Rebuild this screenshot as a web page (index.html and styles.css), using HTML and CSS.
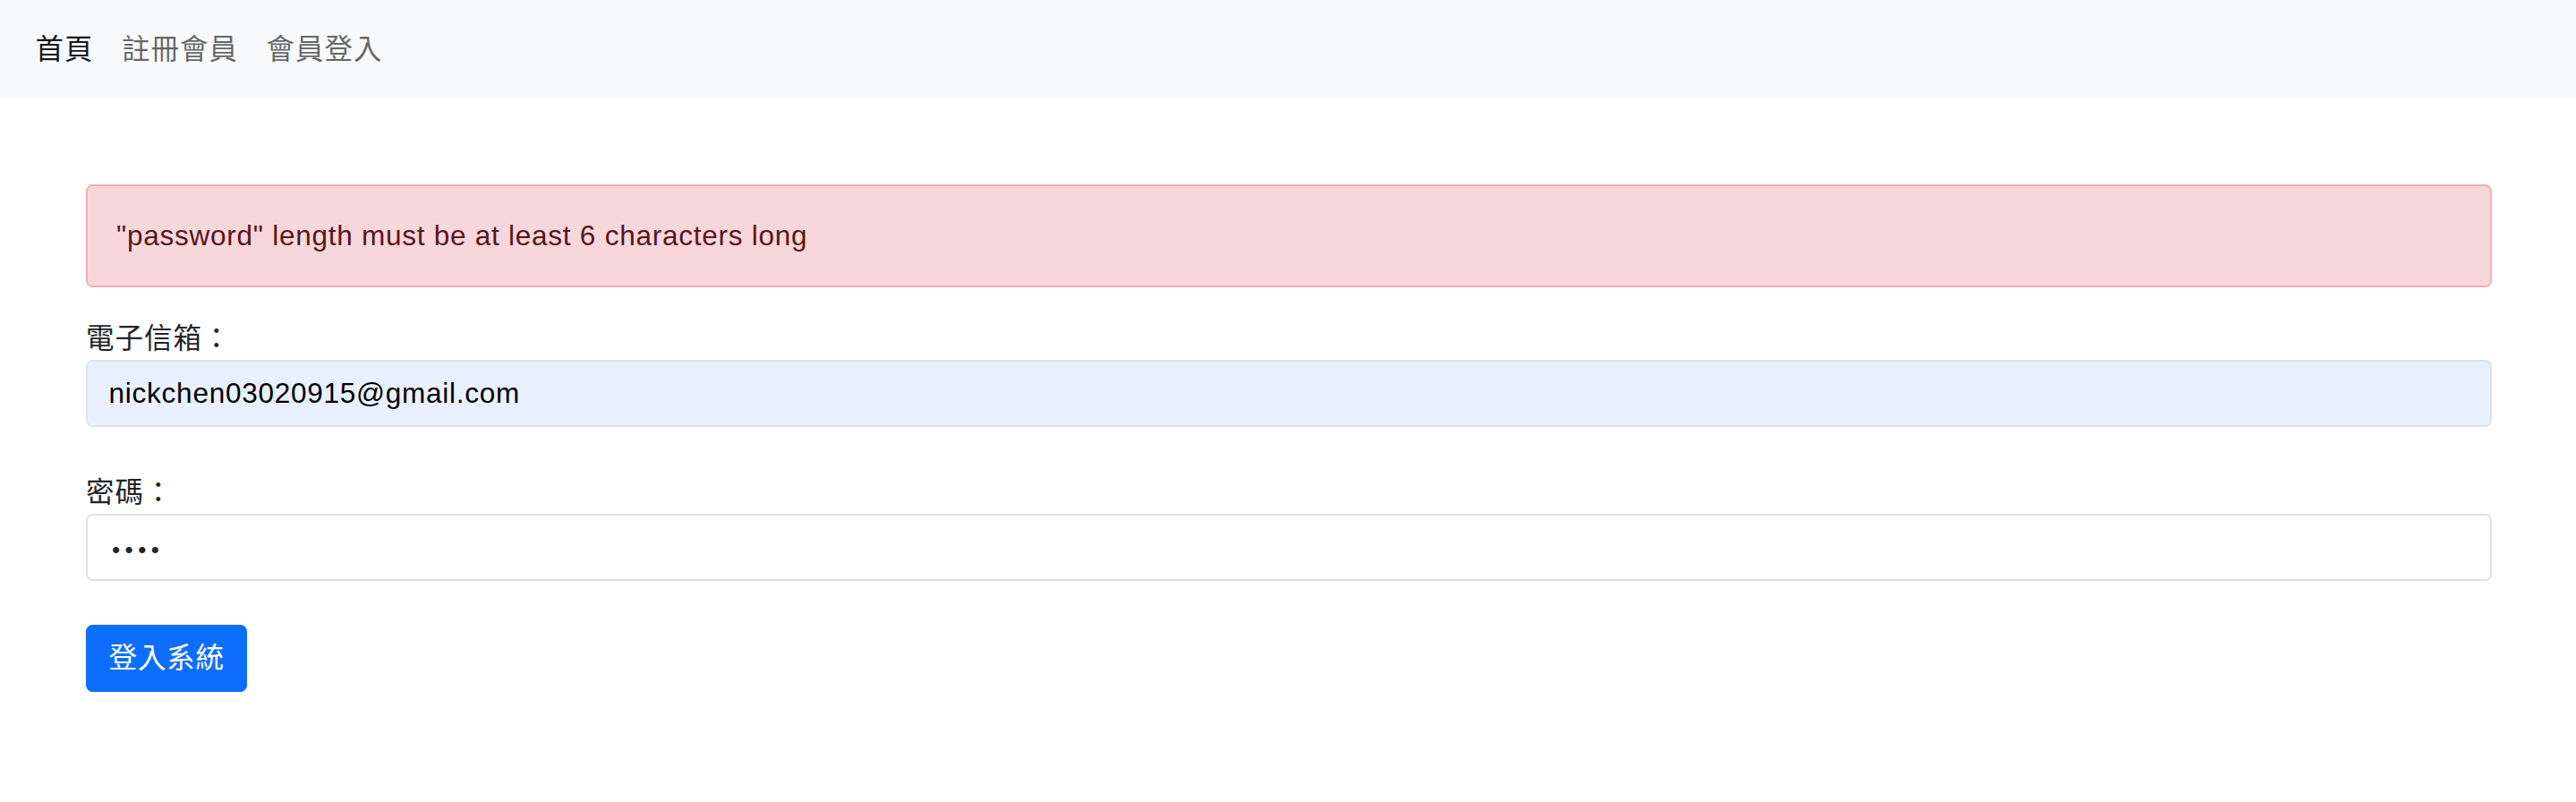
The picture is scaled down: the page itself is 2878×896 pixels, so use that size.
FILE: index.html
```html
<!DOCTYPE html>
<html lang="zh-Hant">
<head>
<meta charset="utf-8">
<title>會員登入</title>
<link rel="stylesheet" href="styles.css">
</head>
<body>
<nav class="navbar">
  <a class="nav-link active" href="#">首頁</a>
  <a class="nav-link" href="#">註冊會員</a>
  <a class="nav-link" href="#">會員登入</a>
</nav>
<main class="container">
  <div class="alert">"password" length must be at least 6 characters long</div>
  <form class="login-form">
    <div class="field">
      <label class="field-label" for="email">電子信箱：</label>
      <input class="field-input autofilled" id="email" type="text" value="nickchen03020915@gmail.com">
    </div>
    <div class="field">
      <label class="field-label" for="password">密碼：</label>
      <input class="field-input password-input" id="password" type="password" value="1234">
    </div>
    <button class="btn-primary" type="button">登入系統</button>
  </form>
</main>
</body>
</html>
```

FILE: styles.css
```css
* { box-sizing: border-box; }

html, body {
  margin: 0;
  padding: 0;
  background: #ffffff;
  font-family: "Liberation Sans", "Noto Sans CJK TC", sans-serif;
  color: #212529;
  letter-spacing: 0.75px;
}

.navbar {
  height: 110px;
  background: #f8f9fa;
  display: flex;
  align-items: center;
  padding: 0 23.6px;
}

.nav-link {
  font-size: 31.5px;
  line-height: 47px;
  padding: 0 15.8px;
  color: rgba(0, 0, 0, 0.6);
  text-decoration: none;
  letter-spacing: 1px;
}

.nav-link.active {
  color: rgba(0, 0, 0, 0.92);
}

.container {
  padding: 96px 94px 0 96px;
}

.alert {
  border: 2px solid #f1aeb5;
  background: #f8d7da;
  color: #58151c;
  border-radius: 7.4px;
  padding: 32px 32px;
  font-size: 31.5px;
  line-height: 47px;
  margin-bottom: 34px;
}

.login-form {
  display: flex;
  flex-direction: column;
}

.field {
  display: flex;
  flex-direction: column;
  margin-bottom: 50px;
}

.field:nth-of-type(2) {
  margin-bottom: 49px;
}

.field-label {
  font-size: 31.5px;
  line-height: 47px;
  color: #212529;
  letter-spacing: 1px;
}

.field-input {
  height: 75px;
  border: 2px solid #dee2e6;
  border-radius: 7.4px;
  padding: 12px 23.6px;
  font-size: 31.5px;
  line-height: 47px;
  font-family: "Liberation Sans", "Noto Sans CJK TC", sans-serif;
  letter-spacing: 0.75px;
  color: #212529;
  background: #ffffff;
  outline: none;
  width: 100%;
}

.field-input.autofilled {
  background: #e8f0fe;
  color: #000000;
}

.password-input {
  font-size: 26px;
  letter-spacing: 5.5px;
  padding: 15px 23.6px 9px 27px;
}

.btn-primary {
  align-self: flex-start;
  height: 75px;
  padding: 12px 23.6px;
  border: 2px solid #0d6efd;
  background: #0d6efd;
  color: #ffffff;
  border-radius: 7.4px;
  font-size: 31.5px;
  line-height: 47px;
  font-family: "Liberation Sans", "Noto Sans CJK TC", sans-serif;
  letter-spacing: 0.8px;
  cursor: pointer;
}
```
